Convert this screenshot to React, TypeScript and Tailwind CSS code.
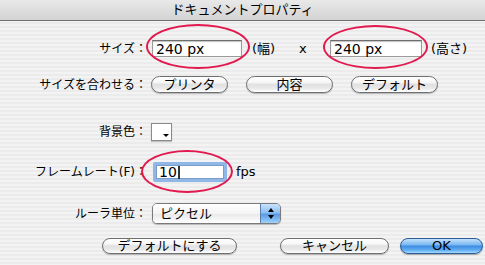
import React from "react";

const aqua =
  "flex items-center justify-center rounded-full border border-[#6f6f6f] bg-[linear-gradient(to_bottom,#ffffff_0%,#f7f7f7_35%,#e1e1e1_50%,#e9e9e9_75%,#ffffff_100%)] shadow-[0_1px_1px_rgba(0,0,0,0.25)] text-[13px] text-black";

const field =
  "flex items-center bg-white border border-[#9a9a9a] border-t-[#6e6e6e] shadow-[inset_0_1px_1px_rgba(0,0,0,0.25)] text-[14px] leading-none text-black";

function Label({ children }: { children: React.ReactNode }) {
  return (
    <div className="w-[147px] shrink-0 text-right text-[12px] leading-none text-black">{children}</div>
  );
}

export default function App() {
  return (
    <div
      className="relative w-[485px] h-[265px] overflow-hidden bg-[image:repeating-linear-gradient(to_bottom,#f3f3f3_0px,#f3f3f3_2px,#ebebeb_2px,#ebebeb_4px)]"
      style={{ fontFamily: "'Lucida Grande','DejaVu Sans','Noto Sans CJK JP',sans-serif" }}
    >
      {/* title bar */}
      <div className="h-[21px] border-b border-[#6e6e6e] bg-[linear-gradient(to_bottom,#e9e9e9,#d3d3d3)] flex items-center justify-center text-[13px] text-black">
        ドキュメントプロパティ
      </div>

      {/* row 1 */}
      <div className="mt-[19px] h-[17px] flex items-center">
        <Label>サイズ：</Label>
        <div className={`${field} ml-[5px] w-[90px] h-[17px] pl-[3px]`}>240 px</div>
        <span className="ml-[10px] w-[47px] text-[13px]">(幅)</span>
        <span className="w-[31px] text-[13px]">x</span>
        <div className={`${field} w-[92px] h-[17px] pl-[3px]`}>240 px</div>
        <span className="ml-[9px] text-[13px]">(高さ)</span>
      </div>

      {/* row 2 */}
      <div className="mt-[19px] h-[17px] flex items-center">
        <Label>サイズを合わせる：</Label>
        <div className={`${aqua} ml-[4px] w-[77px] h-[17px]`}>プリンタ</div>
        <div className={`${aqua} ml-[18px] w-[87px] h-[17px]`}>内容</div>
        <div className={`${aqua} ml-[18px] w-[87px] h-[17px]`}>デフォルト</div>
      </div>

      {/* row 3 */}
      <div className="mt-[30px] h-[18px] flex items-center">
        <Label>背景色：</Label>
        <div className="relative ml-[4px] w-[21px] h-[18px] bg-white border border-[#8a8a8a] shadow-[0_1px_1px_rgba(0,0,0,0.2)]">
          <svg className="absolute right-[2px] bottom-[2px]" width="6" height="4" viewBox="0 0 6 4">
            <path d="M0 0 L6 0 L3 3 Z" fill="#000" />
          </svg>
        </div>
      </div>

      {/* row 4 */}
      <div className="mt-[21px] h-[20px] flex items-center">
        <Label>フレームレート(F)：</Label>
        <div className="ml-[6px] w-[74px] h-[20px] rounded-[2px] bg-[#8fb8e8] p-[3px]">
          <div className="w-full h-full bg-white border border-[#7d9cc4] flex items-center pl-[2px] text-[14px] leading-none">
            10<span className="inline-block w-[2px] h-[13px] bg-[#333] ml-[1px]" />
          </div>
        </div>
        <span className="ml-[9px] text-[13px]">fps</span>
      </div>

      {/* row 5 */}
      <div className="mt-[21px] h-[21px] flex items-center">
        <Label>ルーラ単位：</Label>
        <div className="ml-[5px] w-[129px] h-[21px] flex rounded-[5px] border border-[#7a7a7a] bg-white overflow-hidden shadow-[0_1px_1px_rgba(0,0,0,0.25)]">
          <div className="flex-1 flex items-center pl-[7px] text-[13px] bg-[linear-gradient(to_bottom,#ffffff,#f4f4f4_50%,#e8e8e8_51%,#ffffff)]">
            ピクセル
          </div>
          <div className="w-[20px] border-l border-[#5a7fb0] bg-[linear-gradient(to_bottom,#c9e2fb_0%,#8ec0f2_45%,#5a9be6_55%,#9fd2fb_100%)] flex flex-col items-center justify-center gap-[3px]">
            <svg width="6" height="4" viewBox="0 0 6 4"><path d="M3 0 L6 4 L0 4 Z" fill="#000" /></svg>
            <svg width="6" height="4" viewBox="0 0 6 4"><path d="M0 0 L6 0 L3 4 Z" fill="#000" /></svg>
          </div>
        </div>
      </div>

      {/* bottom buttons */}
      <div className="mt-[14px] h-[16px] flex items-center">
        <div className={`${aqua} ml-[102px] w-[135px] h-[16px]`}>デフォルトにする</div>
        <div className={`${aqua} ml-[43px] w-[109px] h-[16px]`}>キャンセル</div>
        <div className="ml-[11px] w-[83px] h-[16px] flex items-center justify-center rounded-full border border-[#2a5b98] bg-[linear-gradient(to_bottom,#c4e2fc_0%,#7db9f1_40%,#3f8ee2_52%,#63aef2_80%,#a6dcff_100%)] shadow-[0_1px_1px_rgba(0,0,0,0.3)] text-[13px] text-black">
          OK
        </div>
      </div>

      {/* red annotation ellipses */}
      <div className="absolute left-[146px] top-[24px] w-[104px] h-[45px] rounded-[50%] border-[2.5px] border-[#e1194f]" />
      <div className="absolute left-[323px] top-[25px] w-[105px] h-[44px] rounded-[50%] border-[2.5px] border-[#e1194f]" />
      <div className="absolute left-[141px] top-[150px] w-[92px] h-[43px] rounded-[50%] border-[2.5px] border-[#e1194f]" />
    </div>
  );
}
